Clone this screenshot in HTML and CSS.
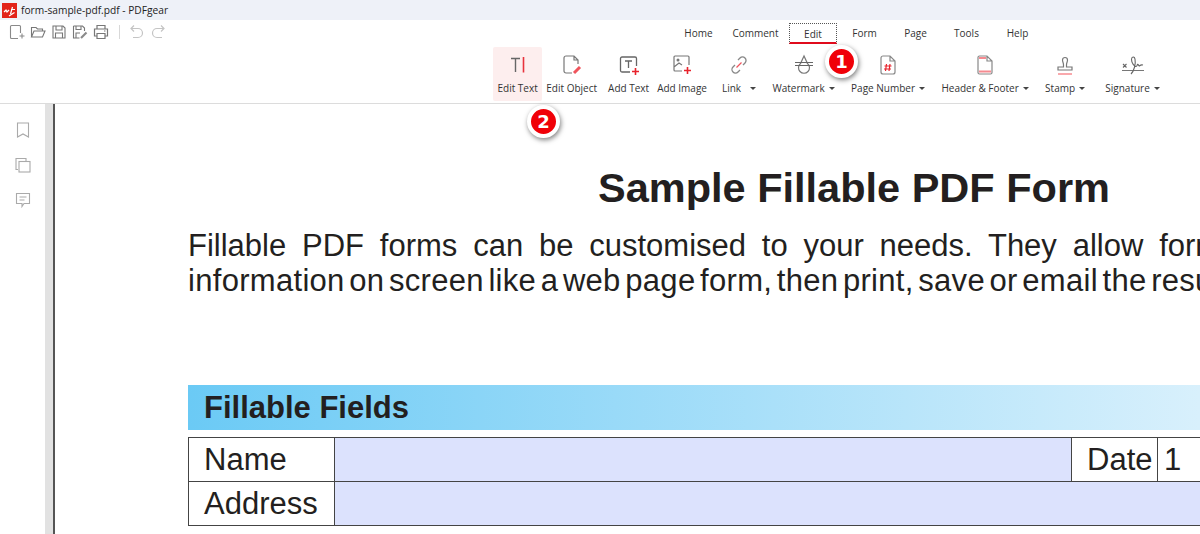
FILE: index.html
```html
<!DOCTYPE html>
<html lang="en">
<head>
    <meta charset="UTF-8">
    <meta name="viewport" content="width=device-width, initial-scale=1.0">
    <title>form-sample-pdf.pdf - PDFgear</title>
    <link rel="stylesheet" href="styles.css">
</head>
<body>
    <div class="titlebar">
        <svg class="logo" width="15" height="15" viewBox="0 0 15 15">
            <rect width="15" height="15" fill="#e2231a"/>
            <path d="M2 9l2-2 1 2 2-2M8.500 11l2-7M9 6.500h4M7 13l5.500-3.500" fill="none" stroke="#fff" stroke-width="1.200"/>
        </svg>
        <span>form-sample-pdf.pdf - PDFgear</span>
    </div>

    <header class="ribbon">
        <!-- quick access icons -->
        <div class="quick">
            <svg width="16" height="16" viewBox="0 0 16 16"><path d="M9 14.500H2.500a1 1 0 0 1-1-1v-11a1 1 0 0 1 1-1h8a1 1 0 0 1 1 1V9M10.500 12h5M13 9.500v5" fill="none" stroke="#8a8a8a" stroke-width="1.100"/></svg>
            <svg width="16" height="16" viewBox="0 0 16 16"><path d="M1.500 13V3.500h4.500l1.500 1.500h5V7M1.500 13l2.500-6h11l-2.500 6z" fill="none" stroke="#777" stroke-width="1.100"/></svg>
            <svg width="16" height="16" viewBox="0 0 16 16"><path d="M2 2h10l2 2v10H2zM5 2v4h6V2M4.500 14V9h7v5" fill="none" stroke="#777" stroke-width="1.100"/></svg>
            <svg width="16" height="16" viewBox="0 0 16 16"><path d="M1.500 2h9l2 2v3M1.500 2v12h6M4 2v3.500h5V2M4 14V9h4" fill="none" stroke="#777" stroke-width="1.100"/><path d="M9 14l5.500-5.500" stroke="#8a8a8a" stroke-width="2.200"/></svg>
            <svg width="16" height="16" viewBox="0 0 16 16"><path d="M4 5V1.500h8V5M4 12H1.500V5h13v7H12M4 9.500h8v5H4zM11 7h1.500" fill="none" stroke="#777" stroke-width="1.200"/></svg>
            <i class="sep"></i>
            <svg width="16" height="16" viewBox="0 0 16 16"><path d="M5 1.500L2 4.500l3 3M2 4.500h7a4.500 4.500 0 0 1 0 9H4" fill="none" stroke="#c4c4c4" stroke-width="1.200"/></svg>
            <svg width="16" height="16" viewBox="0 0 16 16"><path d="M11 1.500l3 3-3 3M14 4.500H7a4.500 4.500 0 0 0 0 9h5" fill="none" stroke="#c4c4c4" stroke-width="1.200"/></svg>
        </div>

        <nav class="tabs">
            <a class="tab">Home</a>
            <a class="tab tab-wide">Comment</a>
            <a class="tab active"><span>Edit</span></a>
            <a class="tab">Form</a>
            <a class="tab">Page</a>
            <a class="tab">Tools</a>
            <a class="tab">Help</a>
        </nav>

        <div class="tools">
            <div class="tool selected">
                <svg width="24" height="24" viewBox="0 0 24 24"><path d="M5 5.500h9M9.500 5.500V19" fill="none" stroke="#666" stroke-width="1.400"/><path d="M17.500 4v15.500" stroke="#e8323c" stroke-width="1.600"/></svg>
                <label>Edit Text</label>
            </div>
            <div class="tool tool-object">
                <svg width="24" height="24" viewBox="0 0 24 24"><path d="M12 20H6a2 2 0 0 1-2-2V5a2 2 0 0 1 2-2h8l4 4v4M14 3v4h4" fill="none" stroke="#777" stroke-width="1.200"/><path d="M14 20l6-6" stroke="#f0545c" stroke-width="3"/></svg>
                <label>Edit Object</label>
            </div>
            <div class="tool tool-text">
                <svg width="24" height="24" viewBox="0 0 24 24"><path d="M13 19H5a1.500 1.500 0 0 1-1.500-1.500v-12A1.500 1.500 0 0 1 5 4h13a1.500 1.500 0 0 1 1.500 1.500V13M8 8h7M11.500 8v7" fill="none" stroke="#666" stroke-width="1.300"/><path d="M15 18.500h7M18.500 15v7" stroke="#e8232c" stroke-width="1.600"/></svg>
                <label>Add Text</label>
            </div>
            <div class="tool">
                <svg width="24" height="24" viewBox="0 0 24 24"><path d="M12 18H5a1 1 0 0 1-1-1V4a1 1 0 0 1 1-1h13a1 1 0 0 1 1 1v8M4 14l5-4 3 2" fill="none" stroke="#777" stroke-width="1.200"/><circle cx="8" cy="7" r="1.500" fill="#777"/><path d="M14 17.500h7M17.500 14v7" stroke="#e8232c" stroke-width="1.600"/></svg>
                <label>Add Image</label>
            </div>
            <div class="tool drop tool-link">
                <svg width="24" height="24" viewBox="0 0 24 24"><path d="M11 7l2-2a3.500 3.500 0 0 1 5 5l-2 2M13 17l-2 2a3.500 3.500 0 0 1-5-5l2-2" fill="none" stroke="#888" stroke-width="1.300"/><path d="M9.500 14.500l5-5" stroke="#f0545c" stroke-width="1.300"/></svg>
                <label>Link<b class="caret caret-far"></b></label>
            </div>
            <div class="tool drop">
                <svg width="24" height="24" viewBox="0 0 24 24"><path d="M12 3l-3.500 7.500a5.500 5.500 0 1 0 7 0z" fill="none" stroke="#777" stroke-width="1.200"/><path d="M3 9.500h18M3 12.500h18" stroke="#666" stroke-width="1.100"/></svg>
                <label>Watermark<b class="caret"></b></label>
            </div>
            <div class="tool drop">
                <svg width="24" height="24" viewBox="0 0 24 24"><path d="M14 3H7a2 2 0 0 0-2 2v14a2 2 0 0 0 2 2h10a2 2 0 0 0 2-2V8zM14 3v5h5" fill="none" stroke="#888" stroke-width="1.200"/><path d="M10.500 11l-1 7M14 11l-1 7M8.500 13h7M8 16h7" stroke="#e8232c" stroke-width="1.200"/></svg>
                <label>Page Number<b class="caret"></b></label>
            </div>
            <div class="tool drop">
                <svg width="24" height="24" viewBox="0 0 24 24"><path d="M14 3H6.500a1.500 1.500 0 0 0-1.500 1.500v15A1.500 1.500 0 0 0 6.500 21h11a1.500 1.500 0 0 0 1.500-1.500V8zM14 3v5h5" fill="none" stroke="#888" stroke-width="1.200"/><path d="M6 5h7M6 18.500h12" stroke="#f58a90" stroke-width="2"/></svg>
                <label>Header &amp; Footer<b class="caret"></b></label>
            </div>
            <div class="tool drop">
                <svg width="24" height="24" viewBox="0 0 24 24"><path d="M10.500 12c0-2.500-1-3-1-5a2.500 2.500 0 0 1 5 0c0 2-1 2.500-1 5v2H19v3H5v-3h5.500z" fill="none" stroke="#777" stroke-width="1.200"/><path d="M5 21h14" stroke="#f9a8ac" stroke-width="2"/></svg>
                <label>Stamp<b class="caret"></b></label>
            </div>
            <div class="tool drop tool-sign">
                <svg width="24" height="24" viewBox="0 0 24 24"><path d="M1 17.500h22" stroke="#777" stroke-width="1"/><path d="M2 11l3.500 3.500M5.500 11L2 14.500M10 21c3-3 5-10 4-15-.6-3-3.500-2.500-3.500 .5 0 3.500 3 7 4.500 7s1-3 2-2 1 2 2 1 1-1 3-.5" fill="none" stroke="#666" stroke-width="1.100"/></svg>
                <label>Signature<b class="caret"></b></label>
            </div>
        </div>
    </header>

    <main class="workspace">
        <aside class="sidebar">
            <svg width="14" height="16" viewBox="0 0 14 16"><path d="M1.500 1h11v14L7 12l-5.500 3z" fill="none" stroke="#aaa" stroke-width="1.100"/></svg>
            <svg width="16" height="16" viewBox="0 0 16 16"><path d="M3 12.500H1V1.500h10V4" fill="none" stroke="#aaa" stroke-width="1.100"/><rect x="4" y="4.500" width="11" height="10.500" fill="#fff" stroke="#aaa" stroke-width="1.100"/></svg>
            <svg width="16" height="16" viewBox="0 0 16 16"><path d="M1.500 1.500h13v10H9L7 14.500v-3H1.500zM4.500 5h7M4.500 8h5" fill="none" stroke="#aaa" stroke-width="1.100"/></svg>
        </aside>
        <div class="gutter"></div>

        <section class="sheet">
            <h1>Sample Fillable PDF Form</h1>
            <p class="line line-wide">Fillable PDF forms can be customised to your needs. They allow form</p>
            <p class="line line-tight">information on screen like a web page form, then print, save or email the results.</p>

            <h2>Fillable Fields</h2>
            <div class="fields">
                <div class="cell label">Name</div>
                <div class="cell input"></div>
                <div class="cell label date">Date</div>
                <div class="cell value">1</div>
                <div class="cell label">Address</div>
                <div class="cell input span"></div>
            </div>
        </section>
    </main>

    <div class="badge badge-one">1</div>
    <div class="badge badge-two">2</div>
</body>
</html>
```

FILE: styles.css
```css
html, body {
    margin: 0;
    padding: 0;
    height: 534px;
    overflow: hidden;
    background: #fff;
}

body {
    font-family: "Open Sans", "Noto Sans", sans-serif;
    color: #333;
}

.titlebar {
    height: 20px;
    display: flex;
    align-items: center;
    gap: 4px;
    padding-left: 2px;
    background: #eef1f8;
    font-size: 10.2px;
    color: #222;
}

.ribbon {
    height: 83px;
    border-bottom: 1px solid #dcdcdc;
    position: relative;
}

.quick {
    position: absolute;
    top: 4px;
    left: 9px;
    display: flex;
    align-items: center;
    gap: 5px;
}

.sep {
    width: 1px;
    height: 14px;
    margin: 0 4px 0 5px;
    background: #d8d8d8;
}

.tabs {
    display: flex;
    padding: 3px 0 0 673px;
    height: 20px;
    font-size: 10px;
}

.tab {
    width: 51px;
    height: 20px;
    line-height: 21px;
    text-align: center;
    color: #333;
}

.tab-wide {
    width: 63px;
}

.tab.active {
    width: 52px;
    display: flex;
    justify-content: center;
}

.tab.active span {
    display: block;
    width: 46px;
    height: 18px;
    border: 1px dotted #555;
    border-bottom: 2px solid #e00b1c;
}

.tools {
    display: flex;
    padding: 4px 0 0 493px;
}

.tool {
    height: 54px;
    padding: 0 5px;
    display: flex;
    flex-direction: column;
    align-items: center;
    font-size: 10px;
    white-space: nowrap;
    border-radius: 2px;
}

.tool svg {
    display: block;
    margin-top: 6px;
}

.tool label {
    margin-top: 3px;
    line-height: 16px;
}

.tool.selected {
    padding: 0 4.5px;
    background: #fdeeee;
}

.tool-object {
    padding: 0 6px 0 4px;
}

.tool-text {
    padding-right: 3px;
}

.drop {
    padding: 0 8.2px;
}

.tool-link {
    padding-left: 10px;
}

.tool-sign {
    padding-left: 12px;
}

.caret {
    display: inline-block;
    margin-left: 4px;
    vertical-align: 2px;
    border-left: 3px solid transparent;
    border-right: 3px solid transparent;
    border-top: 3px solid #444;
}

.caret-far {
    margin-left: 9px;
}

.workspace {
    display: flex;
    height: 430px;
    overflow: hidden;
}

.sidebar {
    flex: 0 0 45px;
    display: flex;
    flex-direction: column;
    align-items: center;
    gap: 19px;
    padding-top: 18px;
    box-sizing: border-box;
}

.gutter {
    flex: 0 0 8px;
    background: #e2e2e2;
    border-right: 2px solid #555;
}

.sheet {
    flex: none;
    width: 1400px;
    padding: 61px 0 0 133px;
    box-sizing: border-box;
    font-family: "Liberation Sans", Arial, sans-serif;
    color: #231f20;
}

h1 {
    margin: 0 0 17px 410px;
    font-size: 41.5px;
    line-height: 46px;
    font-weight: bold;
    white-space: nowrap;
}

.line {
    margin: 0;
    font-size: 31px;
    line-height: 35px;
    white-space: nowrap;
}

.line-wide {
    word-spacing: 7.2px;
}

.line-tight {
    letter-spacing: 0.3px;
    word-spacing: -4.3px;
}

h2 {
    margin: 87px 0 7px;
    height: 45px;
    padding-left: 16px;
    font-size: 31px;
    line-height: 45px;
    font-weight: bold;
    background: linear-gradient(to right, #6bcaf5, #d8f0fc 1012px);
}

.fields {
    display: grid;
    grid-template-columns: 146px 737px 86px 1fr;
    grid-auto-rows: 44px;
    border-top: 1px solid #444;
    border-left: 1px solid #444;
    font-size: 31px;
}

.cell {
    border-right: 1px solid #444;
    border-bottom: 1px solid #444;
    line-height: 44px;
    box-sizing: border-box;
}

.label {
    padding-left: 15px;
}

.date {
    padding-left: 15px;
}

.value {
    padding-left: 6px;
}

.input {
    background: #dce2fd;
}

.span {
    grid-column: 2 / 5;
}

.badge {
    position: absolute;
    width: 25px;
    height: 25px;
    border: 4px solid #fff;
    border-radius: 50%;
    background: #f00008;
    color: #fff;
    font: bold 18px/25px "DejaVu Sans", sans-serif;
    text-align: center;
    box-shadow: 1px 2px 5px rgba(0, 0, 0, 0.5);
}

.badge-one {
    left: 825px;
    top: 45px;
}

.badge-two {
    left: 527px;
    top: 105px;
}
```
